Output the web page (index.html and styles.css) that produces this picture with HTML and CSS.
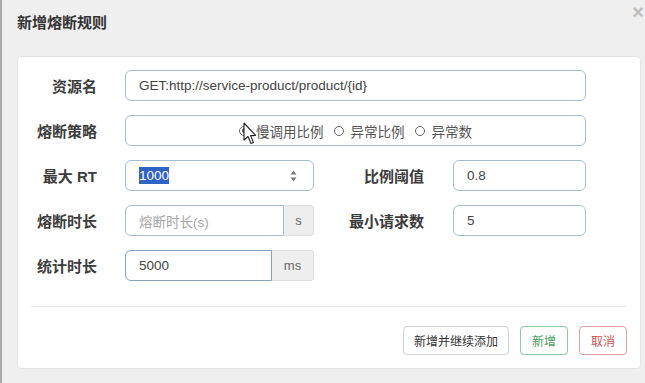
FILE: index.html
```html
<!DOCTYPE html>
<html lang="zh">
<head>
<meta charset="utf-8">
<title>新增熔断规则</title>
<link rel="stylesheet" href="styles.css">
</head>
<body>
<div class="page">
  <header class="head">
    <h1 class="title">新增熔断规则</h1>
    <span class="close">×</span>
  </header>
  <section class="card">
    <div class="form">
      <div class="row">
        <label class="lbl">资源名</label>
        <div class="field full"><span class="val">GET:http://service-product/product/{id}</span></div>
      </div>
      <div class="row">
        <label class="lbl">熔断策略</label>
        <div class="field full radios">
          <span class="radio"><i class="dot on"></i>慢调用比例</span>
          <span class="radio"><i class="dot"></i>异常比例</span>
          <span class="radio"><i class="dot"></i>异常数</span>
        </div>
      </div>
      <div class="row">
        <label class="lbl">最大 RT</label>
        <div class="field sel">
          <span class="val"><span class="hl">1000</span></span>
          <svg class="spin" width="7" height="12" viewBox="0 0 7 12"><path d="M3.5 0.5 L6.5 4.5 L0.5 4.5 Z" fill="#7a7a7a"/><path d="M3.5 11.5 L6.5 7.5 L0.5 7.5 Z" fill="#7a7a7a"/></svg>
        </div>
        <label class="lbl lbl2">比例阈值</label>
        <div class="field right"><span class="val">0.8</span></div>
      </div>
      <div class="row">
        <label class="lbl">熔断时长</label>
        <div class="group">
          <div class="field gin w159"><span class="ph">熔断时长(s)</span></div>
          <span class="addon">s</span>
        </div>
        <label class="lbl lbl2">最小请求数</label>
        <div class="field right"><span class="val">5</span></div>
      </div>
      <div class="row">
        <label class="lbl">统计时长</label>
        <div class="group">
          <div class="field gin w147 focus"><span class="val">5000</span></div>
          <span class="addon">ms</span>
        </div>
      </div>
    </div>
    <hr class="divider">
    <div class="actions">
      <button class="btn">新增并继续添加</button>
      <button class="btn ok">新增</button>
      <button class="btn cancel">取消</button>
    </div>
  </section>
  <svg class="cursor" width="14" height="24" viewBox="0 0 14 24">
    <path d="M1 1 L1 18 L5 14.5 L8 21.5 L10.5 20.5 L7.6 13.6 L12.6 13.4 Z" fill="#fff" stroke="#222" stroke-width="1.1" stroke-linejoin="round"/>
  </svg>
</div>
</body>
</html>
```

FILE: styles.css
```css
html, body {
  margin: 0;
  padding: 0;
}
body {
  background: #efefef;
  font-family: "Liberation Sans", "Noto Sans CJK SC", sans-serif;
}
.page {
  position: relative;
  height: 383px;
  box-sizing: border-box;
  border-left: 2px solid #a9a9a9;
  overflow: hidden;
}
.head {
  height: 56px;
  padding-left: 15px;
  box-sizing: border-box;
}
.title {
  margin: 0;
  padding-top: 14px;
  font-size: 15px;
  line-height: 18px;
  font-weight: bold;
  color: #333;
}
.close {
  position: absolute;
  right: 1px;
  top: 2px;
  font-size: 20px;
  line-height: 20px;
  color: #bdbdbd;
  font-weight: bold;
}
.card {
  margin-left: 15px;
  width: 624px;
  height: 313px;
  box-sizing: border-box;
  background: #fff;
  border: 1px solid #e4e4e4;
  border-radius: 4px;
  padding: 13px 14px 0 13px;
}
.form {
  display: flex;
  flex-direction: column;
  gap: 14px;
}
.row {
  display: flex;
  align-items: center;
  height: 31px;
}
.lbl {
  width: 66px;
  flex: none;
  text-align: right;
  margin-right: 28px;
  font-size: 15px;
  font-weight: bold;
  color: #3c3c3c;
}
.lbl2 {
  width: 110px;
  margin-right: 29px;
}
.field {
  box-sizing: border-box;
  height: 31px;
  border: 1px solid #a9bdd0;
  border-radius: 6px;
  display: flex;
  align-items: center;
  padding: 0 13px;
  font-size: 13.5px;
  color: #444;
  flex: none;
}
.full { width: 461px; }
.right { width: 133px; }
.sel {
  width: 189px;
  justify-content: space-between;
  padding-right: 16px;
}
.hl {
  background: #2f63c6;
  color: #fff;
  padding: 1px 0;
}
.radios {
  justify-content: center;
  gap: 10px;
  color: #555;
}
.radio {
  display: inline-flex;
  align-items: center;
  gap: 7px;
}
.dot {
  width: 10px;
  height: 10px;
  box-sizing: border-box;
  border: 1px solid #666;
  border-radius: 50%;
  display: inline-flex;
  align-items: center;
  justify-content: center;
}
.dot.on::after {
  content: "";
  width: 5px;
  height: 5px;
  border-radius: 50%;
  background: #555;
}
.group {
  display: flex;
  width: 189px;
  flex: none;
}
.gin {
  border-radius: 6px 0 0 6px;
}
.w159 { width: 159px; }
.w147 { width: 147px; }
.focus { border-color: #86a4c2; }
.ph { color: #a5a5a5; }
.addon {
  flex: 1;
  box-sizing: border-box;
  height: 31px;
  border: 1px solid #dedede;
  border-left: none;
  background: #eeeeee;
  border-radius: 0 4px 4px 0;
  display: flex;
  align-items: center;
  justify-content: center;
  color: #666;
  font-size: 13px;
}
.divider {
  margin: 25px 0 0 0;
  border: none;
  border-top: 1px solid #e8e8e8;
  height: 0;
}
.actions {
  display: flex;
  justify-content: flex-end;
  gap: 11px;
  margin-top: 19px;
  margin-right: -1px;
}
.btn {
  height: 29px;
  padding: 0 10px;
  border-radius: 4px;
  font-family: "Liberation Sans", "Noto Sans CJK SC", sans-serif;
  font-size: 12px;
  background: #fff;
  border: 1px solid #d2d2d2;
  color: #333;
}
.ok {
  padding: 0 11px;
  border-color: #8fc7a1;
  color: #4a9e62;
}
.cancel {
  padding: 0 11px;
  border-color: #dca3a3;
  color: #c9534f;
}
.cursor {
  position: absolute;
  left: 241px;
  top: 122px;
}
```
